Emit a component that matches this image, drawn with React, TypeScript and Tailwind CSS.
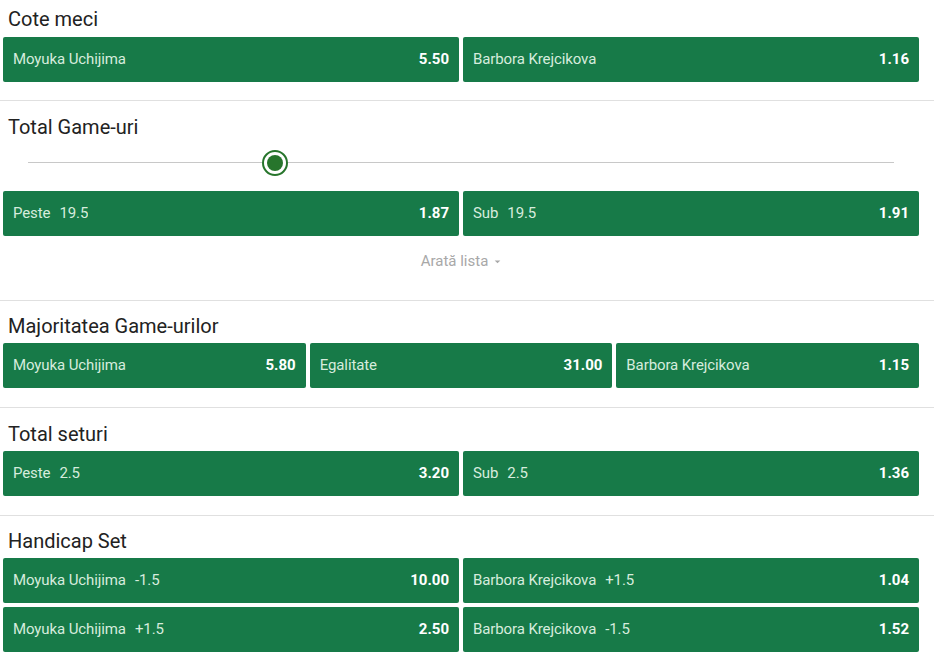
type Odd = { label: string; line?: string; price: string }

function OddButton({ label, line, price }: Odd) {
  return (
    <button className="flex h-[45px] min-w-0 flex-1 items-center justify-between rounded-[2px] bg-[#177a48] px-[10px] text-left">
      <span className="truncate text-[15px] tracking-[-0.1px] text-[#d6ecdd]">
        {label}
        {line && <span className="ml-[9px]">{line}</span>}
      </span>
      <span className="text-[15px] font-bold text-white">{price}</span>
    </button>
  )
}

function Row({ odds }: { odds: Odd[] }) {
  return (
    <div className="flex gap-[4px]">
      {odds.map((o, i) => (
        <OddButton key={i} {...o} />
      ))}
    </div>
  )
}

function Title({ children }: { children: string }) {
  return <h2 className="mb-[5px] pl-[5px] text-[20px] leading-[24px] text-[#222]">{children}</h2>
}

function Slider() {
  return (
    <div className="relative mx-[25px] mb-[15px] mt-[11px] h-[26px]">
      <div className="absolute left-0 right-0 top-[12px] h-px bg-[#c8c8c8]" />
      <div className="absolute left-[234px] top-0 flex size-[26px] items-center justify-center rounded-full border-[2.5px] border-[#27752c] bg-white">
        <div className="size-[16px] rounded-full bg-[#27752c]" />
      </div>
    </div>
  )
}

export default function App() {
  return (
    <div className="w-[934px] bg-white pl-[3px] pr-[15px]" style={{ fontFamily: 'Roboto, "Liberation Sans", sans-serif' }}>
      <section className="pb-[18px] pt-[7px]">
        <Title>Cote meci</Title>
        <div className="pt-[1px]">
          <Row
            odds={[
              { label: 'Moyuka Uchijima', price: '5.50' },
              { label: 'Barbora Krejcikova', price: '1.16' }
            ]}
          />
        </div>
      </section>

      <section className="-ml-[3px] -mr-[15px] border-t border-[#e0e0e0] pl-[3px] pr-[15px] pt-[14px]">
        <Title>Total Game-uri</Title>
        <Slider />
        <Row
          odds={[
            { label: 'Peste', line: '19.5', price: '1.87' },
            { label: 'Sub', line: '19.5', price: '1.91' }
          ]}
        />
        <div className="flex h-[64px] items-center justify-center pb-[14px] text-[15px] text-[#a8a8a8]">
          Arată lista
          <svg viewBox="0 0 8 5" className="ml-[6px] mt-[1px] h-[4px] w-[7px]">
            <path d="M0.5 0.5 L4 4.2 L7.5 0.5 Z" fill="#a8a8a8" />
          </svg>
        </div>
      </section>

      <section className="-ml-[3px] -mr-[15px] border-t border-[#e0e0e0] pb-[19px] pl-[3px] pr-[15px] pt-[13px]">
        <Title>Majoritatea Game-urilor</Title>
        <Row
          odds={[
            { label: 'Moyuka Uchijima', price: '5.80' },
            { label: 'Egalitate', price: '31.00' },
            { label: 'Barbora Krejcikova', price: '1.15' }
          ]}
        />
      </section>

      <section className="-ml-[3px] -mr-[15px] border-t border-[#e0e0e0] pb-[19px] pl-[3px] pr-[15px] pt-[14px]">
        <Title>Total seturi</Title>
        <Row
          odds={[
            { label: 'Peste', line: '2.5', price: '3.20' },
            { label: 'Sub', line: '2.5', price: '1.36' }
          ]}
        />
      </section>

      <section className="-ml-[3px] -mr-[15px] border-t border-[#e0e0e0] pl-[3px] pr-[15px] pt-[13px]">
        <Title>Handicap Set</Title>
        <div className="flex flex-col gap-[4px]">
          <Row
            odds={[
              { label: 'Moyuka Uchijima', line: '-1.5', price: '10.00' },
              { label: 'Barbora Krejcikova', line: '+1.5', price: '1.04' }
            ]}
          />
          <Row
            odds={[
              { label: 'Moyuka Uchijima', line: '+1.5', price: '2.50' },
              { label: 'Barbora Krejcikova', line: '-1.5', price: '1.52' }
            ]}
          />
        </div>
      </section>
    </div>
  )
}
